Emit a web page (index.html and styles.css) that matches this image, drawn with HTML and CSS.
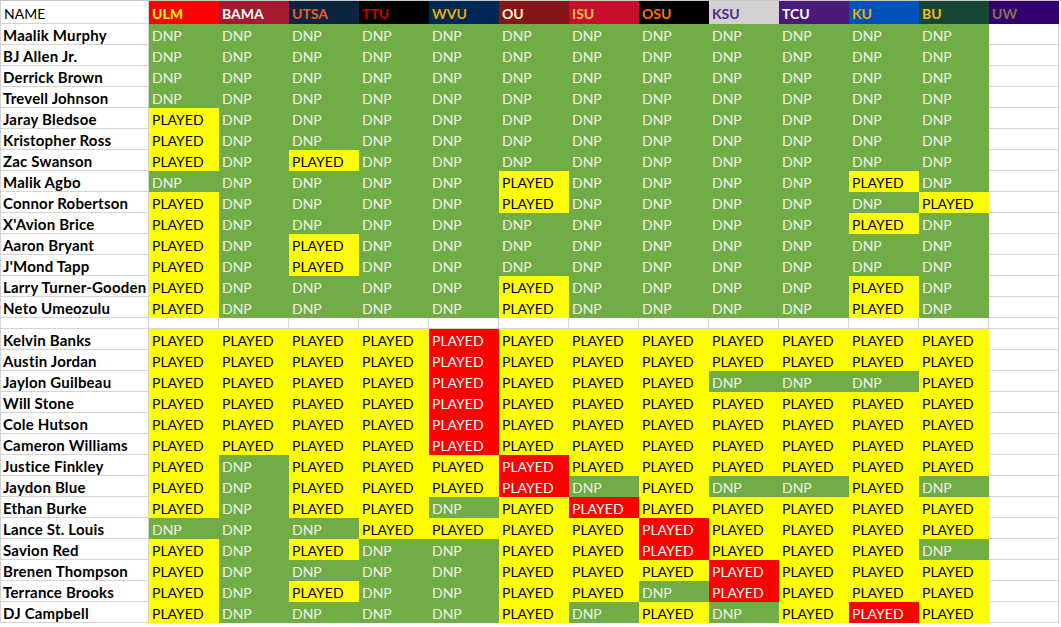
FILE: index.html
```html
<!DOCTYPE html>
<html>
<head>
<meta charset="utf-8">
<link rel="stylesheet" href="styles.css">
</head>
<body>
<div class="sheet">
<div class="row head">
<div class="c n plain">NAME</div>
<div class="c t ulm">ULM</div><div class="c t bama">BAMA</div><div class="c t utsa">UTSA</div><div class="c t ttu">TTU</div><div class="c t wvu">WVU</div><div class="c t ou">OU</div><div class="c t isu">ISU</div><div class="c t osu">OSU</div><div class="c t ksu">KSU</div><div class="c t tcu">TCU</div><div class="c t ku">KU</div><div class="c t bu">BU</div><div class="c t uw">UW</div>
</div>

<div class="row"><div class="c n">Maalik Murphy</div><div class="c d">DNP</div><div class="c d">DNP</div><div class="c d">DNP</div><div class="c d">DNP</div><div class="c d">DNP</div><div class="c d">DNP</div><div class="c d">DNP</div><div class="c d">DNP</div><div class="c d">DNP</div><div class="c d">DNP</div><div class="c d">DNP</div><div class="c d">DNP</div><div class="c"></div></div>
<div class="row"><div class="c n">BJ Allen Jr.</div><div class="c d">DNP</div><div class="c d">DNP</div><div class="c d">DNP</div><div class="c d">DNP</div><div class="c d">DNP</div><div class="c d">DNP</div><div class="c d">DNP</div><div class="c d">DNP</div><div class="c d">DNP</div><div class="c d">DNP</div><div class="c d">DNP</div><div class="c d">DNP</div><div class="c"></div></div>
<div class="row"><div class="c n">Derrick Brown</div><div class="c d">DNP</div><div class="c d">DNP</div><div class="c d">DNP</div><div class="c d">DNP</div><div class="c d">DNP</div><div class="c d">DNP</div><div class="c d">DNP</div><div class="c d">DNP</div><div class="c d">DNP</div><div class="c d">DNP</div><div class="c d">DNP</div><div class="c d">DNP</div><div class="c"></div></div>
<div class="row"><div class="c n">Trevell Johnson</div><div class="c d">DNP</div><div class="c d">DNP</div><div class="c d">DNP</div><div class="c d">DNP</div><div class="c d">DNP</div><div class="c d">DNP</div><div class="c d">DNP</div><div class="c d">DNP</div><div class="c d">DNP</div><div class="c d">DNP</div><div class="c d">DNP</div><div class="c d">DNP</div><div class="c"></div></div>
<div class="row"><div class="c n">Jaray Bledsoe</div><div class="c p">PLAYED</div><div class="c d">DNP</div><div class="c d">DNP</div><div class="c d">DNP</div><div class="c d">DNP</div><div class="c d">DNP</div><div class="c d">DNP</div><div class="c d">DNP</div><div class="c d">DNP</div><div class="c d">DNP</div><div class="c d">DNP</div><div class="c d">DNP</div><div class="c"></div></div>
<div class="row"><div class="c n">Kristopher Ross</div><div class="c p">PLAYED</div><div class="c d">DNP</div><div class="c d">DNP</div><div class="c d">DNP</div><div class="c d">DNP</div><div class="c d">DNP</div><div class="c d">DNP</div><div class="c d">DNP</div><div class="c d">DNP</div><div class="c d">DNP</div><div class="c d">DNP</div><div class="c d">DNP</div><div class="c"></div></div>
<div class="row"><div class="c n">Zac Swanson</div><div class="c p">PLAYED</div><div class="c d">DNP</div><div class="c p">PLAYED</div><div class="c d">DNP</div><div class="c d">DNP</div><div class="c d">DNP</div><div class="c d">DNP</div><div class="c d">DNP</div><div class="c d">DNP</div><div class="c d">DNP</div><div class="c d">DNP</div><div class="c d">DNP</div><div class="c"></div></div>
<div class="row"><div class="c n">Malik Agbo</div><div class="c d">DNP</div><div class="c d">DNP</div><div class="c d">DNP</div><div class="c d">DNP</div><div class="c d">DNP</div><div class="c p">PLAYED</div><div class="c d">DNP</div><div class="c d">DNP</div><div class="c d">DNP</div><div class="c d">DNP</div><div class="c p">PLAYED</div><div class="c d">DNP</div><div class="c"></div></div>
<div class="row"><div class="c n">Connor Robertson</div><div class="c p">PLAYED</div><div class="c d">DNP</div><div class="c d">DNP</div><div class="c d">DNP</div><div class="c d">DNP</div><div class="c p">PLAYED</div><div class="c d">DNP</div><div class="c d">DNP</div><div class="c d">DNP</div><div class="c d">DNP</div><div class="c d">DNP</div><div class="c p">PLAYED</div><div class="c"></div></div>
<div class="row"><div class="c n">X'Avion Brice</div><div class="c p">PLAYED</div><div class="c d">DNP</div><div class="c d">DNP</div><div class="c d">DNP</div><div class="c d">DNP</div><div class="c d">DNP</div><div class="c d">DNP</div><div class="c d">DNP</div><div class="c d">DNP</div><div class="c d">DNP</div><div class="c p">PLAYED</div><div class="c d">DNP</div><div class="c"></div></div>
<div class="row"><div class="c n">Aaron Bryant</div><div class="c p">PLAYED</div><div class="c d">DNP</div><div class="c p">PLAYED</div><div class="c d">DNP</div><div class="c d">DNP</div><div class="c d">DNP</div><div class="c d">DNP</div><div class="c d">DNP</div><div class="c d">DNP</div><div class="c d">DNP</div><div class="c d">DNP</div><div class="c d">DNP</div><div class="c"></div></div>
<div class="row"><div class="c n">J'Mond Tapp</div><div class="c p">PLAYED</div><div class="c d">DNP</div><div class="c p">PLAYED</div><div class="c d">DNP</div><div class="c d">DNP</div><div class="c d">DNP</div><div class="c d">DNP</div><div class="c d">DNP</div><div class="c d">DNP</div><div class="c d">DNP</div><div class="c d">DNP</div><div class="c d">DNP</div><div class="c"></div></div>
<div class="row"><div class="c n">Larry Turner-Gooden</div><div class="c p">PLAYED</div><div class="c d">DNP</div><div class="c d">DNP</div><div class="c d">DNP</div><div class="c d">DNP</div><div class="c p">PLAYED</div><div class="c d">DNP</div><div class="c d">DNP</div><div class="c d">DNP</div><div class="c d">DNP</div><div class="c p">PLAYED</div><div class="c d">DNP</div><div class="c"></div></div>
<div class="row"><div class="c n">Neto Umeozulu</div><div class="c p">PLAYED</div><div class="c d">DNP</div><div class="c d">DNP</div><div class="c d">DNP</div><div class="c d">DNP</div><div class="c p">PLAYED</div><div class="c d">DNP</div><div class="c d">DNP</div><div class="c d">DNP</div><div class="c d">DNP</div><div class="c p">PLAYED</div><div class="c d">DNP</div><div class="c"></div></div>

<div class="row gap"><div class="c n"></div><div class="c"></div><div class="c"></div><div class="c"></div><div class="c"></div><div class="c"></div><div class="c"></div><div class="c"></div><div class="c"></div><div class="c"></div><div class="c"></div><div class="c"></div><div class="c"></div><div class="c"></div></div>

<div class="row"><div class="c n">Kelvin Banks</div><div class="c p">PLAYED</div><div class="c p">PLAYED</div><div class="c p">PLAYED</div><div class="c p">PLAYED</div><div class="c r">PLAYED</div><div class="c p">PLAYED</div><div class="c p">PLAYED</div><div class="c p">PLAYED</div><div class="c p">PLAYED</div><div class="c p">PLAYED</div><div class="c p">PLAYED</div><div class="c p">PLAYED</div><div class="c"></div></div>
<div class="row"><div class="c n">Austin Jordan</div><div class="c p">PLAYED</div><div class="c p">PLAYED</div><div class="c p">PLAYED</div><div class="c p">PLAYED</div><div class="c r">PLAYED</div><div class="c p">PLAYED</div><div class="c p">PLAYED</div><div class="c p">PLAYED</div><div class="c p">PLAYED</div><div class="c p">PLAYED</div><div class="c p">PLAYED</div><div class="c p">PLAYED</div><div class="c"></div></div>
<div class="row"><div class="c n">Jaylon Guilbeau</div><div class="c p">PLAYED</div><div class="c p">PLAYED</div><div class="c p">PLAYED</div><div class="c p">PLAYED</div><div class="c r">PLAYED</div><div class="c p">PLAYED</div><div class="c p">PLAYED</div><div class="c p">PLAYED</div><div class="c d">DNP</div><div class="c d">DNP</div><div class="c d">DNP</div><div class="c p">PLAYED</div><div class="c"></div></div>
<div class="row"><div class="c n">Will Stone</div><div class="c p">PLAYED</div><div class="c p">PLAYED</div><div class="c p">PLAYED</div><div class="c p">PLAYED</div><div class="c r">PLAYED</div><div class="c p">PLAYED</div><div class="c p">PLAYED</div><div class="c p">PLAYED</div><div class="c p">PLAYED</div><div class="c p">PLAYED</div><div class="c p">PLAYED</div><div class="c p">PLAYED</div><div class="c"></div></div>
<div class="row"><div class="c n">Cole Hutson</div><div class="c p">PLAYED</div><div class="c p">PLAYED</div><div class="c p">PLAYED</div><div class="c p">PLAYED</div><div class="c r">PLAYED</div><div class="c p">PLAYED</div><div class="c p">PLAYED</div><div class="c p">PLAYED</div><div class="c p">PLAYED</div><div class="c p">PLAYED</div><div class="c p">PLAYED</div><div class="c p">PLAYED</div><div class="c"></div></div>
<div class="row"><div class="c n">Cameron Williams</div><div class="c p">PLAYED</div><div class="c p">PLAYED</div><div class="c p">PLAYED</div><div class="c p">PLAYED</div><div class="c r">PLAYED</div><div class="c p">PLAYED</div><div class="c p">PLAYED</div><div class="c p">PLAYED</div><div class="c p">PLAYED</div><div class="c p">PLAYED</div><div class="c p">PLAYED</div><div class="c p">PLAYED</div><div class="c"></div></div>
<div class="row"><div class="c n">Justice Finkley</div><div class="c p">PLAYED</div><div class="c d">DNP</div><div class="c p">PLAYED</div><div class="c p">PLAYED</div><div class="c p">PLAYED</div><div class="c r">PLAYED</div><div class="c p">PLAYED</div><div class="c p">PLAYED</div><div class="c p">PLAYED</div><div class="c p">PLAYED</div><div class="c p">PLAYED</div><div class="c p">PLAYED</div><div class="c"></div></div>
<div class="row"><div class="c n">Jaydon Blue</div><div class="c p">PLAYED</div><div class="c d">DNP</div><div class="c p">PLAYED</div><div class="c p">PLAYED</div><div class="c p">PLAYED</div><div class="c r">PLAYED</div><div class="c d">DNP</div><div class="c p">PLAYED</div><div class="c d">DNP</div><div class="c d">DNP</div><div class="c p">PLAYED</div><div class="c d">DNP</div><div class="c"></div></div>
<div class="row"><div class="c n">Ethan Burke</div><div class="c p">PLAYED</div><div class="c d">DNP</div><div class="c p">PLAYED</div><div class="c p">PLAYED</div><div class="c d">DNP</div><div class="c p">PLAYED</div><div class="c r">PLAYED</div><div class="c p">PLAYED</div><div class="c p">PLAYED</div><div class="c p">PLAYED</div><div class="c p">PLAYED</div><div class="c p">PLAYED</div><div class="c"></div></div>
<div class="row"><div class="c n">Lance St. Louis</div><div class="c d">DNP</div><div class="c d">DNP</div><div class="c d">DNP</div><div class="c p">PLAYED</div><div class="c p">PLAYED</div><div class="c p">PLAYED</div><div class="c p">PLAYED</div><div class="c r">PLAYED</div><div class="c p">PLAYED</div><div class="c p">PLAYED</div><div class="c p">PLAYED</div><div class="c p">PLAYED</div><div class="c"></div></div>
<div class="row"><div class="c n">Savion Red</div><div class="c p">PLAYED</div><div class="c d">DNP</div><div class="c p">PLAYED</div><div class="c d">DNP</div><div class="c d">DNP</div><div class="c p">PLAYED</div><div class="c p">PLAYED</div><div class="c r">PLAYED</div><div class="c p">PLAYED</div><div class="c p">PLAYED</div><div class="c p">PLAYED</div><div class="c d">DNP</div><div class="c"></div></div>
<div class="row"><div class="c n">Brenen Thompson</div><div class="c p">PLAYED</div><div class="c d">DNP</div><div class="c d">DNP</div><div class="c d">DNP</div><div class="c d">DNP</div><div class="c p">PLAYED</div><div class="c p">PLAYED</div><div class="c p">PLAYED</div><div class="c r">PLAYED</div><div class="c p">PLAYED</div><div class="c p">PLAYED</div><div class="c p">PLAYED</div><div class="c"></div></div>
<div class="row"><div class="c n">Terrance Brooks</div><div class="c p">PLAYED</div><div class="c d">DNP</div><div class="c p">PLAYED</div><div class="c d">DNP</div><div class="c d">DNP</div><div class="c p">PLAYED</div><div class="c p">PLAYED</div><div class="c d">DNP</div><div class="c r">PLAYED</div><div class="c p">PLAYED</div><div class="c p">PLAYED</div><div class="c p">PLAYED</div><div class="c"></div></div>
<div class="row"><div class="c n">DJ Campbell</div><div class="c p">PLAYED</div><div class="c d">DNP</div><div class="c d">DNP</div><div class="c d">DNP</div><div class="c d">DNP</div><div class="c p">PLAYED</div><div class="c d">DNP</div><div class="c p">PLAYED</div><div class="c d">DNP</div><div class="c p">PLAYED</div><div class="c r">PLAYED</div><div class="c p">PLAYED</div><div class="c"></div></div>
</div>
</body>
</html>
```

FILE: styles.css
```css
html, body {
  margin: 0;
  padding: 0;
  background: #ffffff;
}

body {
  font-family: Lato, "Liberation Sans", sans-serif;
  font-size: 14px;
  color: #000000;
}

.sheet {
  display: flex;
  flex-direction: column;
  border-top: 1px solid #c8c8c8;
  width: 1061px;
}

.row {
  display: grid;
  grid-template-columns: 149px repeat(13, 70px) 1fr;
  height: 21px;
}

.row.head {
  height: 23px;
}

.row.gap {
  height: 11px;
}

.c {
  box-sizing: border-box;
  height: 100%;
  border-right: 1px solid #d4d4d4;
  border-bottom: 1px solid #d4d4d4;
  padding: 0 0 1px 3px;
  display: flex;
  align-items: flex-end;
  line-height: 15px;
  white-space: nowrap;
  overflow: hidden;
}

.n {
  border-left: 1px solid #d4d4d4;
  font-weight: 700;
  font-size: 15px;
  letter-spacing: 0.2px;
  padding-left: 2px;
  color: #000000;
}

.n.plain {
  font-weight: 400;
  font-size: 14px;
  letter-spacing: 0;
  padding-left: 3px;
}

.d {
  background: #70ad47;
  border-color: #70ad47;
  color: #f3f1e2;
}

.p {
  background: #ffff00;
  border-color: #ffff00;
  color: #000000;
}

.r {
  background: #ff0000;
  border-color: #ff0000;
  color: #ffffff;
}

.head .c {
  padding-bottom: 2px;
}

.t {
  font-weight: 700;
}

.ulm { background: #ff0000; border-color: #ff0000; color: #ffff00; }
.bama { background: #a6192e; border-color: #a6192e; color: #ffffff; }
.utsa { background: #0c2340; border-color: #0c2340; color: #f15a22; }
.ttu { background: #000000; border-color: #000000; color: #cc0000; }
.wvu { background: #002855; border-color: #002855; color: #eaaa00; }
.ou { background: #841617; border-color: #841617; color: #fdf9d8; }
.isu { background: #c8102e; border-color: #c8102e; color: #f1be48; }
.osu { background: #000000; border-color: #000000; color: #ff7300; }
.ksu { background: #d1d1d1; border-color: #d1d1d1; color: #512888; }
.tcu { background: #4d1979; border-color: #4d1979; color: #ffffff; }
.ku { background: #0051ba; border-color: #0051ba; color: #e8b000; }
.bu { background: #154734; border-color: #154734; color: #ffb81c; }
.uw { background: #33006f; border-color: #33006f; color: #85754e; }
```
